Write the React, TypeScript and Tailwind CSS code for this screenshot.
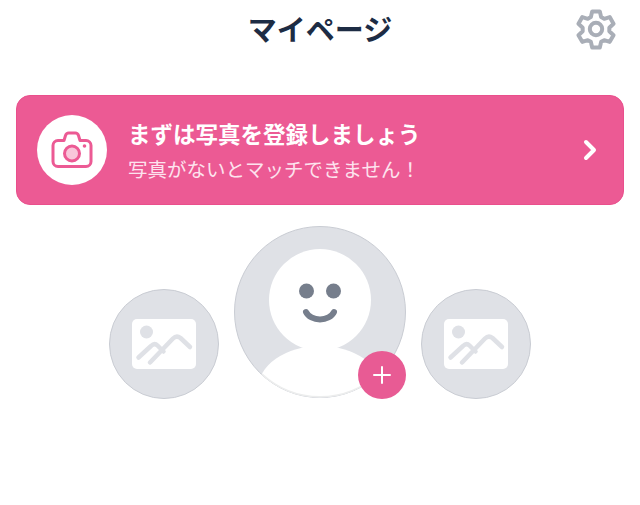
const jpFont = "font-['Noto_Sans_CJK_JP','Noto_Sans',sans-serif]";

function GearIcon() {
  return (
    <svg width="40" height="42" viewBox="0 0 42 44" fill="none" stroke="#a9aeb7" strokeWidth="4.2" strokeLinejoin="round">
      <path d="M17 3.500h8l1.400 6 3.200 1.800 5.800-1.800 4 7-4.400 4.200v3.600l4.400 4.200-4 7-5.800-1.800-3.200 1.800-1.400 6h-8l-1.400-6-3.200-1.800-5.800 1.800-4-7 4.400-4.200v-3.600L2.600 16.500l4-7 5.800 1.800 3.200-1.800z" />
      <circle cx="21" cy="22" r="6.500" />
    </svg>
  );
}

function CameraIcon() {
  return (
    <svg width="42" height="38" viewBox="0 0 42 38" fill="none">
      <path
        d="M7 9.500h6l1.500-5c.5-1.500 1.600-2.500 3.200-2.500h6.600c1.600 0 2.700 1 3.200 2.500l1.500 5h6c2.800 0 5 2.200 5 5v16c0 2.800-2.200 5-5 5H7c-2.800 0-5-2.200-5-5v-16c0-2.800 2.200-5 5-5z"
        stroke="#ec5a94"
        strokeWidth="3"
        strokeLinejoin="round"
      />
      <circle cx="21" cy="22.500" r="7.500" fill="#f9c6da" stroke="#ec5a94" strokeWidth="3" />
      <circle cx="33.500" cy="15" r="1.800" fill="#ec5a94" />
    </svg>
  );
}

function AvatarDrawing() {
  return (
    <svg width="172" height="172" viewBox="0 0 172 172">
      <defs>
        <clipPath id="avatar-clip">
          <circle cx="86" cy="86" r="85.500" />
        </clipPath>
      </defs>
      <circle cx="86" cy="86" r="85.500" fill="#dfe1e6" stroke="#c9ccd3" strokeWidth="1" />
      <g clipPath="url(#avatar-clip)">
        <circle cx="86" cy="74" r="51" fill="#ffffff" />
        <ellipse cx="86" cy="163" rx="62" ry="43" fill="#ffffff" />
      </g>
      <path d="M28 148A85.500 85.500 0 0 0 144 148" fill="none" stroke="#eceded" strokeWidth="1.500" />
      <circle cx="72.500" cy="65" r="7.500" fill="#767e8c" />
      <circle cx="99.500" cy="65" r="7.500" fill="#767e8c" />
      <path d="M72 86c2 4.500 8 7.500 14 7.500s12-3 14-7.500" fill="none" stroke="#767e8c" strokeWidth="6" strokeLinecap="round" />
    </svg>
  );
}

function PhotoSlot() {
  return (
    <div className="flex h-[110px] w-[110px] items-center justify-center rounded-full border border-[#c9ccd3] bg-[#dfe1e6]">
      <svg width="64" height="50" viewBox="0 0 64 50">
        <rect width="64" height="50" rx="5" fill="#ffffff" />
        <circle cx="14.500" cy="13" r="6.500" fill="#dfe1e6" />
        <path
          d="M6.500 38.500 19 27c2.500-2.500 4.500-2.500 6.500-.5l6 6M18 43.500l23-24c2.500-2.500 5-2.500 7.500-.5l9.500 9"
          fill="none"
          stroke="#dfe1e6"
          strokeWidth="4.500"
          strokeLinecap="round"
          strokeLinejoin="round"
        />
      </svg>
    </div>
  );
}

export default function App() {
  return (
    <div className={`h-[505px] w-[640px] overflow-hidden bg-white ${jpFont}`}>
      <header className="relative flex h-[57px] items-center justify-center">
        <h1 className="text-[29px] leading-none font-bold text-[#1d2c44]">マイページ</h1>
        <div className="absolute top-[8px] right-[24px]">
          <GearIcon />
        </div>
      </header>

      <div className="mx-4 mt-[38px] flex h-[110px] items-center rounded-[14px] border border-[#ea4f8c] bg-[#ec5a94] pr-[26px] pl-[20px]">
        <div className="flex h-[70px] w-[70px] shrink-0 items-center justify-center rounded-full bg-white">
          <CameraIcon />
        </div>
        <div className="ml-[21px] flex-1">
          <div className="text-[22.5px] leading-[28px] font-bold whitespace-nowrap text-white">まずは写真を登録しましょう</div>
          <div className="mt-[9px] text-[19.5px] leading-[26px] whitespace-nowrap text-[#fde3ee]">写真がないとマッチできません！</div>
        </div>
        <svg width="14" height="22" viewBox="0 0 14 22" fill="none" stroke="#ffffff" strokeWidth="4" strokeLinecap="round" strokeLinejoin="round">
          <path d="m3 3 8 8-8 8" />
        </svg>
      </div>

      <div className="mt-[21px] flex items-end justify-center gap-[15px]">
        <PhotoSlot />
        <div className="relative mb-px h-[172px] w-[172px]">
          <AvatarDrawing />
          <div className="absolute right-0 -bottom-px flex h-12 w-12 items-center justify-center rounded-full bg-[#e85b94]">
            <svg width="18" height="18" viewBox="0 0 18 18" stroke="#ffffff" strokeWidth="2" strokeLinecap="round">
              <path d="M9 1v16M1 9h16" />
            </svg>
          </div>
        </div>
        <PhotoSlot />
      </div>
    </div>
  );
}
